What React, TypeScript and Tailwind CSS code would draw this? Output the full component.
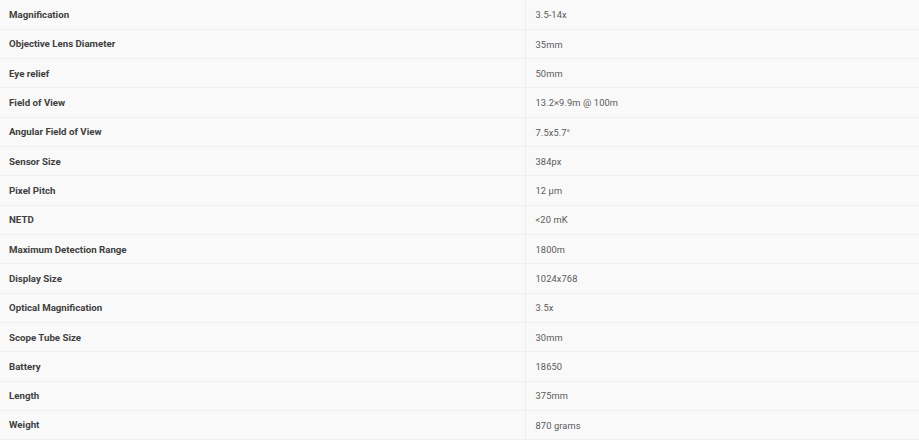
const specs: Array<[string, string]> = [
  ["Magnification", "3.5-14x"],
  ["Objective Lens Diameter", "35mm"],
  ["Eye relief", "50mm"],
  ["Field of View", "13.2×9.9m @ 100m"],
  ["Angular Field of View", "7.5x5.7°"],
  ["Sensor Size", "384px"],
  ["Pixel Pitch", "12 μm"],
  ["NETD", "<20 mK"],
  ["Maximum Detection Range", "1800m"],
  ["Display Size", "1024x768"],
  ["Optical Magnification", "3.5x"],
  ["Scope Tube Size", "30mm"],
  ["Battery", "18650"],
  ["Length", "375mm"],
  ["Weight", "870 grams"],
];

export default function App() {
  return (
    <div className="min-h-screen w-full bg-[#f9f9f9] font-['Roboto',sans-serif]">
      <table className="w-full border-collapse">
        <tbody>
          {specs.map(([label, value]) => (
            <tr key={label} className="h-[29.33px] border-b border-[#eeeeee]">
              <td className="w-[525px] border-r border-[#eeeeee] pt-px pl-[9px] text-[9.7px] font-bold text-[#404040]">
                {label}
              </td>
              <td className="pt-px pl-[10px] text-[9.3px] tracking-[0.1px] text-[#5a5a5a]">{value}</td>
            </tr>
          ))}
        </tbody>
      </table>
    </div>
  );
}
